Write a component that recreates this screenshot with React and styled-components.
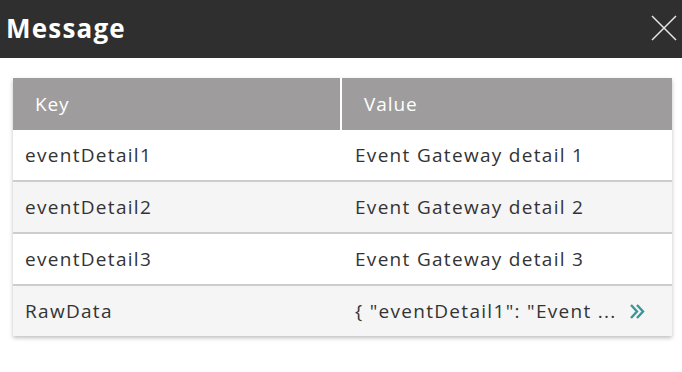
import styled, { createGlobalStyle } from "styled-components";

const GlobalStyle = createGlobalStyle`
  html, body {
    margin: 0;
    padding: 0;
    background: #ffffff;
    font-family: "Open Sans", "Noto Sans", sans-serif;
  }
`;

const ROWS = [
  { key: "eventDetail1", value: "Event Gateway detail 1" },
  { key: "eventDetail2", value: "Event Gateway detail 2" },
  { key: "eventDetail3", value: "Event Gateway detail 3" },
  { key: "RawData", value: '{ "eventDetail1": "Event ...', more: true },
];

const CloseIcon = () => (
  <svg width="26" height="26" viewBox="0 0 26 26">
    <path d="M1 1 L25 25 M25 1 L1 25" stroke="#e6e6e6" strokeWidth="1.5" fill="none" />
  </svg>
);

const MoreIcon = () => (
  <svg width="16" height="15" viewBox="0 0 16 15">
    <path
      d="M2 1 L8 7.5 L2 14 M8 1 L14 7.5 L8 14"
      stroke="#3a9696"
      strokeWidth="2.4"
      fill="none"
    />
  </svg>
);

const App = () => {
  return (
    <>
      <GlobalStyle />
      <S.Dialog>
        <S.TitleBar>
          <S.Title>Message</S.Title>
          <S.CloseButton>
            <CloseIcon />
          </S.CloseButton>
        </S.TitleBar>
        <S.Body>
          <S.Table>
            <S.HeadRow>
              <S.HeadCell>Key</S.HeadCell>
              <S.HeadCell $last>Value</S.HeadCell>
            </S.HeadRow>
            {ROWS.map((row, index) => (
              <S.Row key={row.key} $alt={index % 2 === 1}>
                <S.Cell>{row.key}</S.Cell>
                <S.Cell $value>
                  {row.value}
                  {row.more && (
                    <S.More>
                      <MoreIcon />
                    </S.More>
                  )}
                </S.Cell>
              </S.Row>
            ))}
          </S.Table>
        </S.Body>
      </S.Dialog>
    </>
  );
};
export default App;

const Dialog = styled.div`
  width: 682px;
  height: 372px;
  background: #ffffff;
  display: flex;
  flex-direction: column;
`;

const TitleBar = styled.div`
  height: 58px;
  background: #2f2f2f;
  display: flex;
  align-items: center;
  justify-content: space-between;
  padding: 0 5px 0 6px;
  box-sizing: border-box;
`;

const Title = styled.h1`
  margin: 0;
  color: #ffffff;
  font-size: 26px;
  font-weight: 700;
  letter-spacing: 1.2px;
  line-height: 1;
  padding-bottom: 2px;
`;

const CloseButton = styled.div`
  width: 26px;
  height: 26px;
  display: flex;
  cursor: pointer;
  margin-bottom: 2px;
`;

const Body = styled.div`
  padding: 20px 10px 0 13px;
`;

const Table = styled.div`
  width: 659px;
  background: #ffffff;
  box-shadow: 0 2px 4px rgba(0, 0, 0, 0.25);
`;

const HeadRow = styled.div`
  display: grid;
  grid-template-columns: 329px 1fr;
  height: 52px;
  background: #9e9c9c;
`;

const HeadCell = styled.div`
  display: flex;
  align-items: center;
  padding-left: 22px;
  color: #ffffff;
  font-size: 19px;
  font-weight: 400;
  letter-spacing: 0.9px;
  ${(props) => !props.$last && "border-right: 2px solid #ffffff;"}
`;

const Row = styled.div`
  display: grid;
  grid-template-columns: 329px 1fr;
  height: 50px;
  background: ${(props) => (props.$alt ? "#f5f5f5" : "#ffffff")};
  border-bottom: 2px solid #cdcdcd;

  &:last-child {
    border-bottom: none;
  }
`;

const Cell = styled.div`
  display: flex;
  align-items: center;
  padding-left: ${(props) => (props.$value ? "13px" : "12px")};
  color: #333333;
  font-size: 19px;
  letter-spacing: 1.3px;
  white-space: nowrap;
`;

const More = styled.span`
  display: flex;
  margin-left: 12px;
  cursor: pointer;
`;

const S = {
  Dialog,
  TitleBar,
  Title,
  CloseButton,
  Body,
  Table,
  HeadRow,
  HeadCell,
  Row,
  Cell,
  More,
};
